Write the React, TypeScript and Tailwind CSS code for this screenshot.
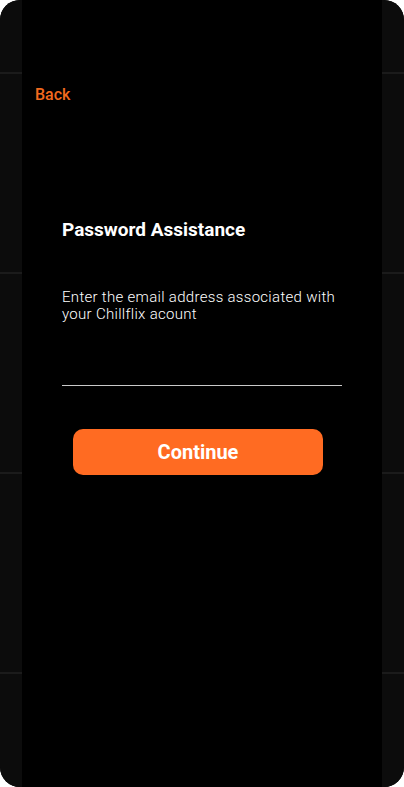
const SideStrip = () => (
  <div className="w-[22px] flex-shrink-0 bg-[#0c0c0c] flex flex-col pt-[72px]">
    {[0, 1, 2, 3].map((i) => (
      <div key={i} className="flex flex-col">
        <div className="h-[2px] bg-[#1b1b1b]" />
        <div className="h-[198px]" />
      </div>
    ))}
  </div>
);

export default function App() {
  return (
    <div className="w-[404px] h-[787px] bg-white" style={{ fontFamily: 'Roboto, "Liberation Sans", sans-serif' }}>
      <div className="w-full h-full rounded-[20px] overflow-hidden flex bg-black">
        <SideStrip />
        <div className="flex-1 flex flex-col bg-black">
          <p className="mt-[85px] ml-[13px] text-[16px] leading-[20px] font-medium text-[#f26a1e]">Back</p>

          <div className="px-[40px] flex flex-col">
            <h1 className="mt-[113px] text-[19px] leading-[24px] font-bold text-white">Password Assistance</h1>
            <p className="mt-[47px] text-[15px] leading-[17px] font-light tracking-[0.3px] text-white">
              Enter the email address associated with your Chillflix acount
            </p>
            <div className="mt-[62px] h-px bg-[#c9c9c9]" />
          </div>

          <button className="mt-[43px] ml-[51px] w-[250px] h-[46px] rounded-[10px] bg-[#ff6b22] text-white text-[20px] font-bold">
            Continue
          </button>
        </div>
        <SideStrip />
      </div>
    </div>
  );
}
